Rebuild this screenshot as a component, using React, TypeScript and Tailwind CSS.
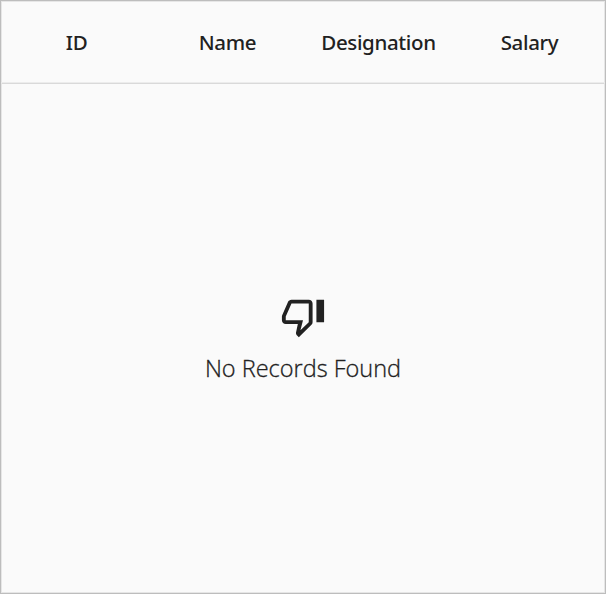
const columns = ['ID', 'Name', 'Designation', 'Salary'];

export default function App() {
  return (
    <div className="h-[594px] w-[606px] border border-[#bdbdbd] bg-[#fafafa] font-['Noto_Sans','Open_Sans',sans-serif] text-[#212121]">
      <div className="flex h-full flex-col border border-[#e6e6e6]">
        <div className="-mx-px grid h-[81px] grid-cols-4 items-center border-b border-[#ececec] pt-px text-center text-[20.5px] font-medium tracking-[-0.35px]">
          {columns.map((name) => (
            <div key={name}>{name}</div>
          ))}
        </div>
        <div className="flex flex-1 flex-col items-center border-t border-[#d9d9d9] pt-[210px]">
          <svg className="h-[45px] w-[46px]" viewBox="0 0 24 24" preserveAspectRatio="none" fill="currentColor">
            <path d="M15 3H6c-.83 0-1.54.5-1.84 1.22l-3.02 7.05c-.09.23-.14.47-.14.73v2c0 1.1.9 2 2 2h6.31l-.95 4.57-.03.32c0 .41.17.79.44 1.06L9.83 23l6.59-6.59c.36-.36.58-.86.58-1.41V5c0-1.1-.9-2-2-2zm0 12-4.34 4.34L12 14H3v-2l3-7h9v10zm4-12h4v12h-4z" />
          </svg>
          <div className="mt-[12px] font-['Open_Sans','Noto_Sans',sans-serif] text-[23.5px] font-light leading-[34px] [-webkit-text-stroke:0.3px_#212121]">No Records Found</div>
        </div>
      </div>
    </div>
  );
}
